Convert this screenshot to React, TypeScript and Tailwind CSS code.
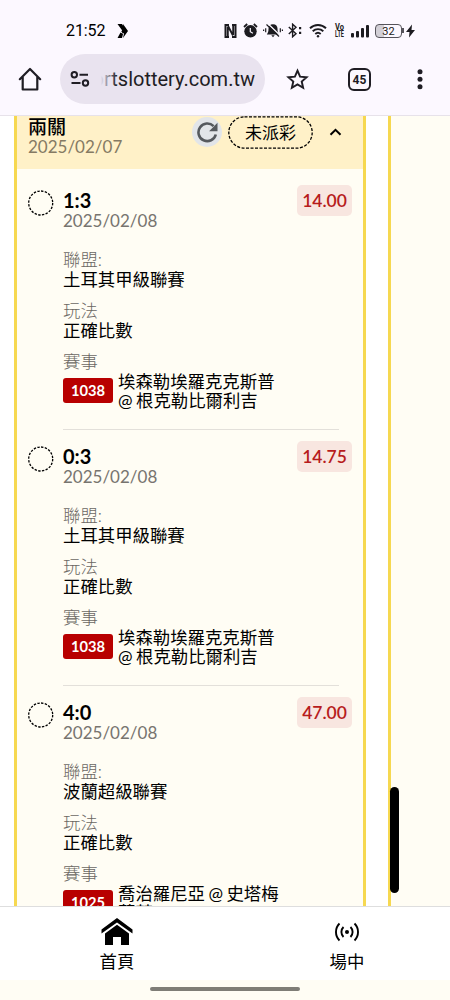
import React from 'react';

interface Bet {
  score: string;
  date: string;
  odds: string;
  league: string;
  code: string;
  teams: string[];
}

const bets: Bet[] = [
  { score: '1:3', date: '2025/02/08', odds: '14.00', league: '土耳其甲級聯賽', code: '1038', teams: ['埃森勒埃羅克克斯普', '@ 根克勒比爾利吉'] },
  { score: '0:3', date: '2025/02/08', odds: '14.75', league: '土耳其甲級聯賽', code: '1038', teams: ['埃森勒埃羅克克斯普', '@ 根克勒比爾利吉'] },
  { score: '4:0', date: '2025/02/08', odds: '47.00', league: '波蘭超級聯賽', code: '1025', teams: ['喬治羅尼亞 @ 史塔梅', '莫菲'] },
];

const StatusBar: React.FC = () => (
  <div className="flex h-[50px] items-center pt-[11px] text-[#1c1b20]">
    <span className="ml-[66px] w-[39px] font-['Roboto',sans-serif] text-[16px] leading-5 tracking-[-0.1px] text-black">21:52</span>
    <svg className="ml-[12px] h-4 w-[12px]" viewBox="0 0 12 16" fill="#000">
      <path d="M.5 1H5L8 5.500 4.500 6.500zM6 1l5 7-4.500-.5zM4 8.500 6.500 7.500 11 8 6 15 7 10.500zM3.500 9.500 6 11l-1 4H.5z" />
      <path d="M4.500 5.500 8 4.500 9.500 9 5.500 10.500z" />
    </svg>
    <div className="ml-[95px] flex items-center">
      <svg className="h-[14px] w-[13px]" viewBox="0 0 13 14" fill="none" stroke="currentColor">
        <path d="M5 1H1.500v12H5M8 1h3.500v12H8" strokeWidth="2" />
        <path d="M3.800 3v10M9.200 1v10M4 2l5 9.500" strokeWidth="1.900" />
      </svg>
      <svg className="ml-[6px] h-[15px] w-[15px]" viewBox="0 0 15 15">
        <circle cx="7.500" cy="8.300" r="6.200" fill="currentColor" />
        <path d="M1 4 4.200 1M14 4l-3.200-3" stroke="currentColor" strokeWidth="1.800" />
        <path d="M7.300 5v3.700l2.600 1.500" fill="none" stroke="#fcf8ff" strokeWidth="1.200" />
      </svg>
      <svg className="ml-[5px] h-[15px] w-[20px]" viewBox="0 0 20 15">
        <path d="M10 1.200c-3 0-4.500 2-4.500 4.600 0 3-.5 4-1.700 5.700h12.400c-1.200-1.700-1.700-2.700-1.700-5.700C14.500 3.200 13 1.200 10 1.200zM8.300 12.300h3.400L10 14.300z" fill="currentColor" />
        <path d="M5 .8l12.500 12" stroke="#fcf8ff" strokeWidth="1.300" />
        <path d="M3.500 1.500l12.500 12M2.700 5.200v4M.6 6.500v1.600M17.300 5.200v4M19.400 6.500v1.600" stroke="currentColor" strokeWidth="1.200" />
      </svg>
      <svg className="ml-[5px] h-[15px] w-[15px]" viewBox="0 0 15 15" fill="none" stroke="currentColor" strokeWidth="1.400">
        <path d="M.8 4 8 10.800 4.600 13.800V1.200L8 4.200.8 11" />
        <path d="M11 5.200h2.200M11 9.800h2.200" strokeWidth="2.200" />
      </svg>
      <svg className="ml-[6px] h-[15px] w-[18px]" viewBox="0 0 18 15" fill="none" stroke="currentColor" strokeWidth="1.900">
        <path d="M1 5.200a11.500 11.500 0 0 1 16 0M3.700 8.200a7.700 7.700 0 0 1 10.600 0M6.300 11a4 4 0 0 1 5.400 0" />
        <circle cx="9" cy="13.300" r="1.200" fill="currentColor" stroke="none" />
      </svg>
      <svg className="ml-[8px] h-[15px] w-[9px] overflow-visible font-['Roboto',sans-serif] text-[8.500px] font-bold" viewBox="0 0 9 15" fill="currentColor">
        <text x="0" y="7" textLength="9" lengthAdjust="spacingAndGlyphs">Vo</text>
        <text x="0" y="14" textLength="9" lengthAdjust="spacingAndGlyphs">LTE</text>
      </svg>
      <svg className="ml-[7px] h-[14px] w-[19px]" viewBox="0 0 19 14" fill="currentColor">
        <rect x="0" y="9" width="3" height="4.500" rx="1" />
        <rect x="5" y="7" width="3" height="6.500" rx="1" />
        <rect x="10" y="4" width="3" height="9.500" rx="1" />
        <rect x="15" y="1" width="3" height="12.500" rx="1" />
      </svg>
      <div className="ml-[5px] flex h-[14px] w-[27px] items-center justify-center rounded-[4px] border border-[#55535a] bg-linear-to-r from-[#d2cfd6] from-30% to-transparent to-30% pt-px font-['Roboto',sans-serif] text-[11px] leading-none">32</div>
      <div className="h-[5px] w-[1.500px] bg-[#55535a]" />
      <svg className="ml-[2px] h-[14px] w-[9px]" viewBox="0 0 9 14" fill="currentColor">
        <path d="M6 .5 0 8h3.500L3 13.500 9 6H5.500z" />
      </svg>
    </div>
  </div>
);

const AddressBar: React.FC = () => (
  <div className="flex h-[66px] items-start border-b border-[#e7e2ea] pt-[4px] text-[#1f1d24]">
    <div className="flex h-[50px] w-[60px] items-center">
      <svg className="ml-[18px] h-6 w-6" viewBox="0 0 24 24" fill="none" stroke="currentColor" strokeWidth="2.200" strokeLinejoin="round" strokeLinecap="round">
        <path d="M1.800 12.200 12 2l10.200 10.200M4.700 10v12.500h14.600V10" />
      </svg>
    </div>
    <div className="flex h-[50px] w-[205px] items-center overflow-hidden rounded-full bg-[#e9e3ef]">
      <svg className="ml-[10px] h-[18px] w-5 shrink-0" viewBox="0 0 20 18" fill="none" stroke="currentColor" strokeWidth="2">
        <circle cx="4.300" cy="4.800" r="2.700" />
        <path d="M9.500 4.800H18M1.500 13h9" />
        <circle cx="15.500" cy="13" r="2.700" />
      </svg>
      <div className="relative ml-[9px] flex w-[156px] justify-end overflow-hidden">
        <span className="font-['Roboto',sans-serif] text-[20px] leading-7 whitespace-nowrap">ortslottery.com.tw</span>
        <div className="absolute inset-y-0 left-0 w-[18px] bg-linear-to-r from-[#e9e3ef] from-10% to-[#e9e3ef]/0" />
      </div>
    </div>
    <div className="flex h-[50px] flex-1 items-center">
      <svg className="ml-[21px] h-[22px] w-[23px]" viewBox="0 0 24 23" fill="none" stroke="currentColor" strokeWidth="2">
        <path d="m12 2.800 2.700 6.200 6.800.6-5.100 4.500 1.500 6.600-5.900-3.500-5.900 3.500 1.500-6.600L2.500 9.600l6.800-.6z" />
      </svg>
      <div className="ml-[39px] flex h-[23px] w-[23px] items-center justify-center rounded-[6px] border-[2.400px] border-current pt-px font-['Roboto',sans-serif] text-[12px] leading-none font-bold">45</div>
      <svg className="ml-[46px] h-[22px] w-[6px]" viewBox="0 0 6 22" fill="currentColor">
        <circle cx="3" cy="3.800" r="2.500" />
        <circle cx="3" cy="11.300" r="2.500" />
        <circle cx="3" cy="18.800" r="2.500" />
      </svg>
    </div>
  </div>
);

const SlipHeader: React.FC = () => (
  <div className="flex h-[53px] shrink-0 bg-[#fff1c8]">
    <div className="ml-[11px] w-[164px]">
      <div className="mt-[1px] text-[19px] leading-5 font-medium">兩關</div>
      <div className="text-[17px] leading-5 text-[#857a63]">2025/02/07</div>
    </div>
    <div className="mt-[1px] flex h-[30px] w-[30px] items-center justify-center rounded-full bg-[#e2e5e9]">
      <svg className="h-[21px] w-[21px]" viewBox="0 0 21 21" fill="none" stroke="#55595e" strokeWidth="2.600">
        <path d="M18.800 12.500A8.800 8.800 0 1 1 16.600 4.200" />
        <path d="M20.500.8v8.400h-8.400z" fill="#55595e" stroke="none" />
      </svg>
    </div>
    <div className="ml-[6px] h-[33px] w-[85px]">
      <svg className="absolute h-[33px] w-[85px]" viewBox="0 0 85 33">
        <rect x=".8" y=".8" width="83.400" height="31.400" rx="15.700" fill="none" stroke="#000" strokeWidth="1.300" strokeDasharray="3 1.500" />
      </svg>
      <div className="text-center text-[17px] leading-[33px]">未派彩</div>
    </div>
    <svg className="mt-[11px] ml-[16px] h-[10px] w-[13px]" viewBox="0 0 13 10" fill="none" stroke="#000" strokeWidth="2">
      <path d="m1.500 7.800 5-5 5 5" />
    </svg>
  </div>
);

const Field: React.FC<{ label: string; value: string }> = ({ label, value }) => (
  <div className="mb-[11px]">
    <div className="font-light text-[#6b6863]">{label}</div>
    <div>{value}</div>
  </div>
);

const BetItem: React.FC<{ bet: Bet; last: boolean }> = ({ bet, last }) => (
  <div className="flex h-[256px] shrink-0">
    <svg className="mt-[16px] ml-[11px] h-[26px] w-[26px]" viewBox="0 0 26 26">
      <circle cx="12.700" cy="13" r="12" fill="none" stroke="#000" strokeWidth="1.300" strokeDasharray="2.400 1.370" />
    </svg>
    <div className={`ml-[9px] w-[276px] ${last ? '' : 'border-b border-[#e3e0da]'}`}>
      <div className="flex pt-[11px]">
        <div className="w-[234px] shrink-0 pt-[5px]">
          <div className="text-[20px] leading-5 font-bold">{bet.score}</div>
          <div className="text-[17px] leading-[21px] text-[#77746f]">{bet.date}</div>
        </div>
        <div className="h-[31px] w-[55px] shrink-0 rounded-[5px] bg-[#f8e6e0] text-center text-[17.500px] leading-[31px] font-semibold text-[#b71c1c]">{bet.odds}</div>
      </div>
      <div className="mt-[18.500px] text-[17.400px] leading-5">
        <Field label="聯盟:" value={bet.league} />
        <Field label="玩法" value="正確比數" />
        <div className="font-light text-[#6b6863]">賽事</div>
        <div className="flex">
          <div className="mt-[6.500px] h-[25px] w-[50px] rounded-[3px] bg-[#b80000] text-center text-[14.700px] leading-[25px] font-bold text-white">{bet.code}</div>
          <div className="ml-[5px] leading-[19px]">
            {bet.teams.map((team) => (
              <div key={team} className="[word-spacing:-1px]">{team}</div>
            ))}
          </div>
        </div>
      </div>
    </div>
  </div>
);

const BottomNav: React.FC = () => (
  <div className="flex h-[74px] border-t border-[#dedede] bg-white text-[17.400px]">
    <div className="ml-[2px] flex w-[230px] shrink-0 flex-col items-center pt-[11px]">
      <svg className="h-7 w-8" viewBox="0 0 32 28" fill="#000">
        <path d="M16 0 31.500 11.500v4L16 4.500.500 15.500v-4z" />
        <path d="M16 6.800 28 15.500V27h-8v-8h-8v8H4V15.500z" />
      </svg>
      <div className="mt-[6px] leading-5">首頁</div>
    </div>
    <div className="flex w-[230px] shrink-0 flex-col items-center pt-[14px]">
      <svg className="h-[22px] w-6" viewBox="0 0 24 22" fill="none" stroke="#000" strokeWidth="1.900">
        <circle cx="12" cy="11" r="2" fill="#000" stroke="none" />
        <path d="M8.500 6a7 7 0 0 0 0 10M15.500 6a7 7 0 0 1 0 10M4.500 2.500a12 12 0 0 0 0 17M19.500 2.500a12 12 0 0 1 0 17" />
      </svg>
      <div className="mt-[9px] leading-5">場中</div>
    </div>
  </div>
);

const App: React.FC = () => {
  return (
    <div className="flex h-[1000px] w-[450px] flex-col overflow-hidden bg-[#fffdf4] font-['Lato','Noto_Sans_CJK_TC',sans-serif] text-black">
      <div className="bg-[#fcf8ff]">
        <StatusBar />
        <AddressBar />
      </div>
      <main className="relative flex h-[790px] bg-white">
        <div className="ml-[14px] flex w-[352px] flex-col overflow-hidden border-x-3 border-[#f6d850] bg-[#fffdf4]">
          <SlipHeader />
          <div className="mt-[5px]">
            {bets.map((bet, index) => (
              <BetItem key={bet.score} bet={bet} last={index === bets.length - 1} />
            ))}
          </div>
        </div>
        <div className="ml-[22px] flex-1 border-l-3 border-[#f6d850] bg-[#fffdf4]" />
        <div className="absolute top-[671px] left-[390px] h-[106px] w-[9px] rounded-full bg-black" />
      </main>
      <BottomNav />
      <div className="flex justify-center pt-[7px]">
        <div className="h-[4px] w-[150px] rounded-full bg-[#7f7d76]" />
      </div>
    </div>
  );
};

export default App;
